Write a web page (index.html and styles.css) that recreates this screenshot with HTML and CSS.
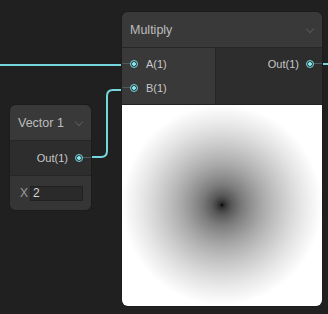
FILE: index.html
```html
<!DOCTYPE html>
<html>
<head>
<meta charset="utf-8">
<link rel="stylesheet" href="styles.css">
</head>
<body>
<div class="canvas">
  <svg class="wires" width="328" height="314" viewBox="0 0 328 314">
    <path d="M0 65 H122" />
    <path d="M91 157 H101 Q107 157 107 151 V96 Q107 90 113 90 H122" />
    <path d="M322 64 H328" />
  </svg>

  <div class="node node-multiply">
    <div class="node-header">
      <span class="node-title">Multiply</span>
      <span class="chevron"></span>
    </div>
    <div class="ports">
      <div class="inputs">
        <div class="port port-in"><span class="dot"></span><span class="label">A(1)</span></div>
        <div class="port port-in"><span class="dot"></span><span class="label">B(1)</span></div>
      </div>
      <div class="outputs">
        <div class="port port-out"><span class="label">Out(1)</span><span class="dot"></span></div>
      </div>
    </div>
    <div class="preview"></div>
  </div>

  <div class="node node-vector">
    <div class="node-header">
      <span class="node-title">Vector 1</span>
      <span class="chevron"></span>
    </div>
    <div class="outputs solo">
      <div class="port port-out"><span class="label">Out(1)</span><span class="dot"></span></div>
    </div>
    <div class="field-row">
      <span class="field-label">X</span>
      <span class="field-input">2</span>
    </div>
  </div>
</div>
</body>
</html>
```
FILE: styles.css
```css
* { box-sizing: border-box; }
html, body { margin: 0; padding: 0; }
body {
  background: #202020;
  font-family: "Liberation Sans", Arial, sans-serif;
  overflow: hidden;
}
.canvas {
  position: relative;
  width: 328px;
  height: 314px;
}
.wires {
  position: absolute;
  left: 0;
  top: 0;
}
.wires path {
  fill: none;
  stroke: #76d6de;
  stroke-width: 2;
}
.node {
  position: absolute;
  background: #393939;
  border-radius: 6px;
  overflow: hidden;
  box-shadow: 0 0 0 1px #1c1c1c;
}
.node-multiply {
  left: 122px;
  top: 12px;
  width: 200px;
}
.node-vector {
  left: 10px;
  top: 105px;
  width: 81px;
}
.node-header {
  height: 36px;
  display: flex;
  align-items: center;
  justify-content: space-between;
  padding: 0 9px 0 8px;
  background: #393939;
  border-bottom: 1px solid #262626;
}
.node-title {
  color: #bdbdbd;
  font-size: 12.5px;
  padding-top: 1px;
}
.chevron {
  width: 6px;
  height: 6px;
  border-right: 1px solid #575757;
  border-bottom: 1px solid #575757;
  transform: rotate(45deg);
  margin-top: -2px;
}
.ports {
  display: flex;
  height: 57px;
  border-bottom: 1px solid #222222;
}
.inputs {
  width: 94px;
  background: #393939;
  border-right: 1px solid #262626;
  padding-top: 4px;
}
.outputs {
  flex: 1;
  background: #2d2d2d;
  padding-top: 4px;
}
.port {
  height: 24px;
  display: flex;
  align-items: center;
  font-size: 11px;
  color: #c8c8c8;
  gap: 8px;
}
.port-in { padding-left: 8px; }
.port-out { justify-content: flex-end; padding-right: 8px; gap: 7px; }
.dot {
  position: relative;
  width: 8px;
  height: 8px;
  border-radius: 50%;
  border: 1.5px solid #76d6de;
  background: radial-gradient(circle, #8ee6ee 0 1.5px, #2a3c3e 2.2px);
  flex: none;
}
.port-in .dot::before,
.port-out .dot::after {
  content: "";
  position: absolute;
  top: 2px;
  height: 1px;
  width: 9px;
  background: #4d5a5b;
}
.port-in .dot::before { right: 7px; }
.port-out .dot::after { left: 7px; }
.preview {
  height: 201px;
  background: radial-gradient(circle 100px at 100px 100px,
    #000 0%, #2b2b2b 2%, #414141 5%, #5a5a5a 10%, #7b7b7b 20%, #939393 30%,
    #a8a8a8 40%, #bababa 50%, #cacaca 60%, #d9d9d9 70%, #e7e7e7 80%,
    #f3f3f3 90%, #ffffff 100%);
}
.outputs.solo {
  height: 35px;
  padding-top: 5px;
  border-bottom: 1px solid #262626;
}
.field-row {
  height: 34px;
  display: flex;
  align-items: center;
  padding-left: 10px;
  gap: 2px;
  background: #353535;
}
.field-label {
  font-size: 12px;
  color: #9c9c9c;
}
.field-input {
  width: 53px;
  height: 15px;
  background: #2a2a2a;
  border: 1px solid #212121;
  font-size: 12px;
  color: #d4d4d4;
  line-height: 13px;
  padding-left: 2px;
}
```
